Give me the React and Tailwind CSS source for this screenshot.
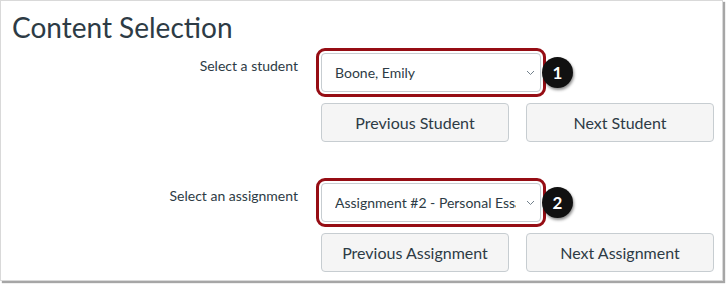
import { useState } from 'react';

const font = { fontFamily: 'Lato, "Noto Sans", sans-serif' };

function Badge({ n }) {
  return (
    <span className="absolute left-[221px] top-[4px] flex h-[31px] w-[31px] items-center justify-center rounded-full bg-[#111] text-[17px] font-bold text-white shadow-[1px_2px_3px_rgba(0,0,0,0.45)]">
      {n}
    </span>
  );
}

function Picker({ value, options, onChange, n }) {
  return (
    <div className="relative w-[220px]">
      <select
        value={value}
        onChange={(e) => onChange(e.target.value)}
        className="h-[39px] w-[220px] appearance-none overflow-hidden rounded-[4px] border border-[#c7cdd1] bg-white pl-[13px] pr-[24px] text-[14px] text-[#2d3b45] outline-[3px] outline-offset-[2px] outline-[#960d14] outline-solid"
        style={font}
      >
        {options.map((o) => (
          <option key={o}>{o}</option>
        ))}
      </select>
      <svg className="pointer-events-none absolute right-[6px] top-[17px] h-[6px] w-[9px]" viewBox="0 0 9 6" fill="none">
        <path d="M1 1l3.5 3.5L8 1" stroke="#73818c" strokeWidth="1" />
      </svg>
      <Badge n={n} />
    </div>
  );
}

function Btn({ children }) {
  return (
    <button className="h-[39px] w-[188px] rounded-[4px] border border-[#c7cdd1] bg-[#f5f5f5] text-[16px] text-[#2d3b45]" style={font}>
      {children}
    </button>
  );
}

function Row({ label, picker, prev, next }) {
  return (
    <div className="flex">
      <label className="w-[297px] pt-[3px] text-right text-[14px] leading-[20px] text-[#2d3b45]">{label}</label>
      <div className="ml-[23px] flex flex-col gap-[11px]">
        {picker}
        <div className="flex gap-[17px]">
          <Btn>{prev}</Btn>
          <Btn>{next}</Btn>
        </div>
      </div>
    </div>
  );
}

export default function App() {
  const [student, setStudent] = useState('Boone, Emily');
  const [assignment, setAssignment] = useState('Assignment #2 - Personal Essay');

  return (
    <div className="h-[284px] w-[726px] bg-white" style={font}>
      <div className="h-[281px] w-[723px] border border-[#d9d9d9] bg-white shadow-[2px_2px_1px_rgba(0,0,0,0.35)]">
        <h1 className="pl-[11px] pt-[9px] text-[28px] leading-[34px] text-[#2d3b45]">Content Selection</h1>
        <div className="mt-[9px] flex flex-col gap-[41px]">
          <Row
            label="Select a student"
            picker={<Picker n="1" value={student} onChange={setStudent} options={['Boone, Emily', 'Carter, James', 'Diaz, Maria']} />}
            prev="Previous Student"
            next="Next Student"
          />
          <Row
            label="Select an assignment"
            picker={<Picker n="2" value={assignment} onChange={setAssignment} options={['Assignment #1 - Introduction', 'Assignment #2 - Personal Essay', 'Assignment #3 - Research Paper']} />}
            prev="Previous Assignment"
            next="Next Assignment"
          />
        </div>
      </div>
    </div>
  );
}
